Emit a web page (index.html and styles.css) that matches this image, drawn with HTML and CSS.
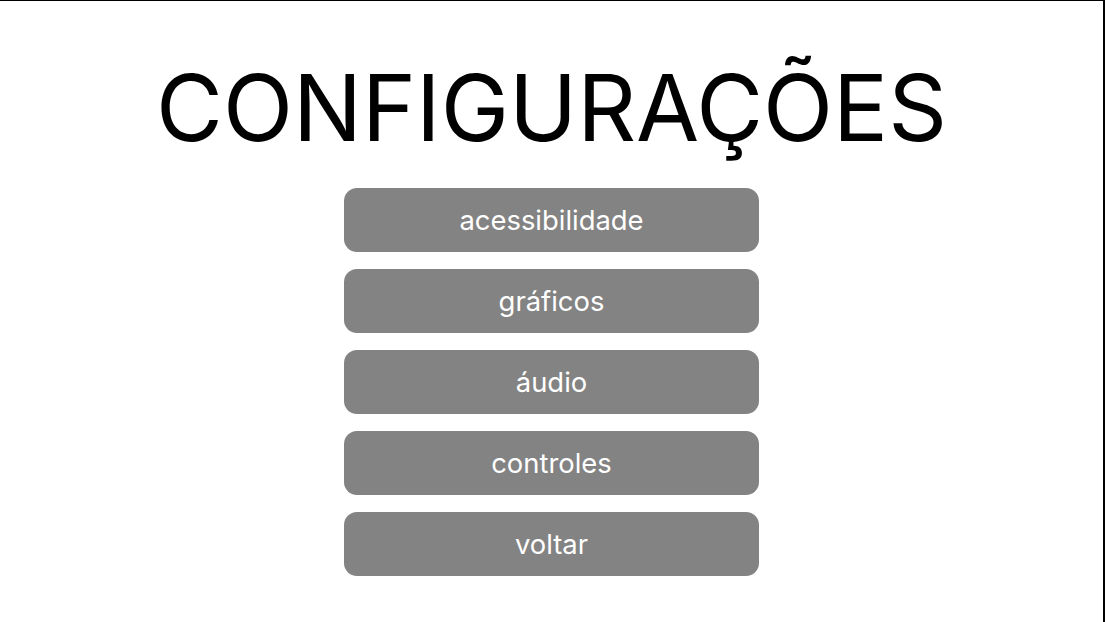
FILE: index.html
```html
<!DOCTYPE html>
<html lang="pt">
<head>
<meta charset="utf-8">
<title>Configurações</title>
<link rel="stylesheet" href="styles.css">
</head>
<body>
<main class="screen">
  <h1 class="title">CONFIGURAÇÕES</h1>
  <nav class="menu">
    <button class="menu-btn">acessibilidade</button>
    <button class="menu-btn">gráficos</button>
    <button class="menu-btn">áudio</button>
    <button class="menu-btn">controles</button>
    <button class="menu-btn">voltar</button>
  </nav>
</main>
</body>
</html>
```
FILE: styles.css
```css
html, body {
  margin: 0;
  padding: 0;
  background: #ffffff;
}
.screen {
  box-sizing: border-box;
  width: 1105px;
  height: 622px;
  border-top: 1px solid #000;
  border-right: 2px solid #000;
  display: flex;
  flex-direction: column;
  align-items: center;
  font-family: Inter, "Noto Sans", sans-serif;
}
.title {
  margin: 57px 0 0 0;
  font-size: 91.6px;
  font-weight: 400;
  line-height: 100px;
  color: #000;
  letter-spacing: 0;
}
.menu {
  margin-top: 30px;
  display: flex;
  flex-direction: column;
  gap: 17.5px;
}
.menu-btn {
  width: 415px;
  height: 63.6px;
  border: none;
  border-radius: 13px;
  background: #838383;
  color: #ffffff;
  font-family: Inter, "Noto Sans", sans-serif;
  font-size: 27.4px;
  font-weight: 400;
  padding: 0;
}
```
